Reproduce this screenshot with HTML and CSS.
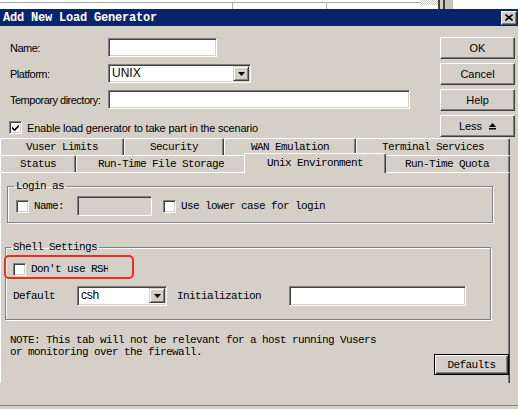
FILE: index.html
```html
<!DOCTYPE html>
<html lang="en">
<head>
<meta charset="utf-8">
<title>Add New Load Generator</title>
<link rel="stylesheet" href="styles.css">
</head>
<body>
<div class="topstrip">
  <div class="ts-seg ts-1"></div>
  <div class="ts-seg ts-2"></div>
  <div class="ts-seg ts-3"></div>
  <div class="ts-check"></div>
  <div class="ts-bar"></div>
  <div class="ts-gap"></div>
  <div class="ts-bar"></div>
  <div class="ts-grey"></div>
</div>
<div class="titlebar">
  <span class="title">Add New Load Generator</span>
  <span class="close"><svg width="8" height="7" viewBox="0 0 8 7"><path d="M0.5 0.5 L7.5 6.5 M7.5 0.5 L0.5 6.5" stroke="#000" stroke-width="1.6"/></svg></span>
</div>
<div class="upper">
  <div class="form">
    <div class="row r1"><span class="lbl">Name:</span><span class="edit w-name"></span></div>
    <div class="row r2"><span class="lbl">Platform:</span>
      <span class="combo w-platform"><span class="combo-text">UNIX</span><span class="drop"><svg width="7" height="4" viewBox="0 0 7 4"><polygon points="0,0 7,0 3.5,4" fill="#000"/></svg></span></span>
    </div>
    <div class="row r3"><span class="lbl">Temporary directory:</span><span class="edit w-temp"></span></div>
    <div class="row r4"><span class="chk"><svg width="7" height="7" viewBox="0 0 7 7"><path d="M0 2.5 L2.5 5 L7 0.5 L7 2.8 L2.5 7.3 L0 4.8 Z" fill="#000"/></svg></span><span class="chk-label">Enable load generator to take part in the scenario</span></div>
  </div>
  <div class="buttons">
    <div class="btn">OK</div>
    <div class="btn">Cancel</div>
    <div class="btn">Help</div>
    <div class="btn">Less <svg class="less-ico" width="7" height="7" viewBox="0 0 7 7"><polygon points="3.5,0 7,4 0,4" fill="#000"/><rect x="0" y="5" width="7" height="1.5" fill="#000"/></svg></div>
  </div>
</div>
<div class="tabs">
  <div class="tabrow back">
    <div class="tab t-vuser">Vuser Limits</div>
    <div class="tab t-security">Security</div>
    <div class="tab t-wan">WAN Emulation</div>
    <div class="tab t-terminal">Terminal Services</div>
  </div>
  <div class="tabrow front">
    <div class="tab t-status">Status</div>
    <div class="tab t-rtfs">Run-Time File Storage</div>
    <div class="tab t-unix selected">Unix Environment</div>
    <div class="tab t-quota">Run-Time Quota</div>
  </div>
</div>
<div class="panel">
  <fieldset class="group g-login">
    <legend>Login as</legend>
    <div class="grow login-row">
      <span class="chk"></span>
      <span class="mono lbl-name">Name:</span>
      <span class="edit disabled w-login"></span>
      <span class="chk chk-lower"></span>
      <span class="mono lbl-lower">Use lower case for login</span>
    </div>
  </fieldset>
  <fieldset class="group g-shell">
    <legend>Shell Settings</legend>
    <div class="grow rsh-row">
      <span class="chk"></span>
      <span class="mono rsh-label">Don't use RSH</span>
      <span class="highlight"></span>
    </div>
    <div class="grow shell-row">
      <span class="mono lbl-default">Default</span>
      <span class="combo w-shell"><span class="combo-text shell-text">csh</span><span class="drop"><svg width="7" height="4" viewBox="0 0 7 4"><polygon points="0,0 7,0 3.5,4" fill="#000"/></svg></span></span>
      <span class="mono lbl-init">Initialization</span>
      <span class="edit w-init"></span>
    </div>
  </fieldset>
  <div class="bottom-row">
    <p class="mono note">NOTE: This tab will not be relevant for a host running Vusers<br>or monitoring over the firewall.</p>
    <div class="btn default-btn mono">Defaults</div>
  </div>
</div>
<div class="footer-line"></div>
</body>
</html>
```
FILE: styles.css
```css
* { box-sizing: border-box; }
html, body { margin: 0; padding: 0; }
body {
  width: 518px;
  height: 409px;
  overflow: hidden;
  background: #d4d0c8;
  font-family: "Liberation Sans", Arial, sans-serif;
  font-size: 11px;
  color: #000;
}

/* top strip (window behind) */
.topstrip { height: 9px; background: #fff; display: flex; padding-top: 2px; }
.ts-seg { height: 7px; border-top: 1px solid #a8a8a8; }
.ts-1 { width: 233px; border-right: 1px solid #b0b0b0; }
.ts-2 { width: 94px; border-right: 1px solid #b0b0b0; }
.ts-3 { width: 94px; }
.ts-check {
  width: 17px; height: 5px; margin-top: -2px;
  background: repeating-conic-gradient(#c8c8c8 0 25%, #fff 0 50%) 0 0 / 2px 2px;
}
.ts-bar { width: 2px; margin-top: -2px; background: #404040; }
.ts-gap { width: 3px; margin-top: -2px; background: #d4d0c8; }
.ts-grey { width: 8px; margin-top: -2px; background: #c8c4bc; }

/* title bar */
.titlebar {
  height: 17px;
  background: #0a246a;
  display: flex;
  align-items: center;
  justify-content: space-between;
  padding: 0 1px 0 3px;
}
.title {
  color: #fff;
  font-family: "Liberation Mono", monospace;
  font-weight: bold;
  font-size: 12px;
  letter-spacing: -0.2px;
}
.close {
  width: 16px; height: 14px;
  background: #d4d0c8;
  border: 1px solid; border-color: #fff #404040 #404040 #fff;
  box-shadow: inset -1px -1px 0 #808080;
  display: flex; align-items: center; justify-content: center;
}

/* upper area */
.upper { display: flex; height: 112px; }
.form { width: 440px; padding-top: 12px; }
.row { display: flex; align-items: center; }
.r1, .r2, .r3 { height: 19px; }
.r2, .r3 { margin-top: 7px; }
.r4 { height: 13px; margin-top: 12px; }
.lbl { width: 108px; padding-left: 10px; letter-spacing: -0.5px; white-space: nowrap; flex: none; }
.edit {
  display: block; height: 19px; background: #fff; flex: none;
  border: 1px solid; border-color: #808080 #fff #fff #808080;
  box-shadow: inset 1px 1px 0 #404040, inset -1px -1px 0 #d4d0c8;
}
.edit.disabled { background: #d4d0c8; }
.w-name { width: 109px; }
.w-temp { width: 302px; }
.combo {
  display: flex; height: 19px; background: #fff; padding: 1px; flex: none;
  border: 1px solid; border-color: #808080 #fff #fff #808080;
  box-shadow: inset 1px 1px 0 #404040, inset -1px -1px 0 #d4d0c8;
}
.w-platform { width: 143px; }
.combo-text { flex: 1; padding-left: 2px; font-size: 12px; line-height: 15px; }
.drop {
  width: 16px; height: 15px; background: #d4d0c8;
  border: 1px solid; border-color: #d4d0c8 #404040 #404040 #d4d0c8;
  box-shadow: inset 1px 1px 0 #fff, inset -1px -1px 0 #808080;
  display: flex; align-items: center; justify-content: center;
}
.chk {
  width: 13px; height: 13px; flex: none; background: #fff;
  border: 1px solid; border-color: #808080 #fff #fff #808080;
  box-shadow: inset 1px 1px 0 #404040, inset -1px -1px 0 #d4d0c8;
  display: flex; align-items: center; justify-content: center;
}
.r4 .chk { margin-left: 9px; }
.chk-label { margin-left: 5px; letter-spacing: -0.2px; white-space: nowrap; }

/* buttons */
.buttons { width: 75px; padding-top: 11px; display: flex; flex-direction: column; gap: 4px; }
.btn {
  height: 22px; background: #d4d0c8;
  border: 1px solid; border-color: #fff #404040 #404040 #fff;
  box-shadow: inset -1px -1px 0 #808080;
  display: flex; align-items: center; justify-content: center;
  font-size: 11px;
}
.less-ico { margin-left: 7px; }

/* tabs */
.tabs { height: 34px; }
.tabrow { display: flex; height: 17px; align-items: flex-end; }
.mono, .tab, legend {
  font-family: "Liberation Mono", "DejaVu Sans Mono", monospace;
  font-size: 11px;
  letter-spacing: -0.6px;
}
.tab {
  height: 17px; flex: none;
  border-top: 1px solid #fff; border-left: 1px solid #fff; border-right: 1px solid #404040;
  box-shadow: inset -1px 0 0 #808080;
  border-radius: 2px 2px 0 0;
  display: flex; align-items: center; justify-content: center;
  background: #d4d0c8; white-space: nowrap;
}
.t-vuser { width: 124px; }
.t-security { width: 100px; }
.t-wan { width: 132px; }
.t-terminal { width: 154px; }
.t-status { width: 76px; }
.t-rtfs { width: 170px; }
.t-unix { width: 138px; }
.t-quota { width: 126px; }
.tab.selected {
  position: relative; z-index: 2;
  width: 142px; height: 20px;
  margin: 0 -2px -1px;
  padding-bottom: 2px;
}

/* panel */
.panel {
  width: 510px; height: 211px;
  border-top: 1px solid #fff; border-left: 1px solid #fff; border-right: 1px solid #404040;
  box-shadow: inset -1px 0 0 #808080;
  padding-top: 7px;
}
.group {
  margin: 0; padding: 0; min-width: 0;
  width: 486px;
  border: 1px solid #808080;
  box-shadow: inset 1px 1px 0 #fff, 1px 1px 0 #fff;
}
.group legend { padding: 0 2px; line-height: 12px; }
.g-login { margin-left: 6px; padding: 4px 0 6px; }
.g-login legend { margin-left: 6px; }
.g-shell { margin: 18px 0 0 4px; padding: 4px 0 13px; }
.g-shell legend { margin-left: 5px; }
.grow { display: flex; align-items: center; white-space: nowrap; }
.login-row { height: 20px; }
.login-row > .chk:first-child { margin-left: 8px; }
.lbl-name { margin-left: 5px; }
.w-login { width: 75px; margin-left: 13px; height: 20px; }
.chk-lower { margin-left: 11px; }
.lbl-lower { margin-left: 5px; }

.rsh-row { height: 24px; position: relative; }
.rsh-row .chk { margin-left: 7px; }
.rsh-label { margin-left: 5px; width: 77px; overflow: hidden; }
.highlight {
  position: absolute; left: -2px; top: -2px;
  width: 130px; height: 24px;
  border: 2px solid #ee2a24; border-radius: 5px;
}
.shell-row { height: 20px; margin-top: 5px; }
.lbl-default { margin-left: 7px; width: 64px; }
.w-shell { width: 90px; height: 20px; }
.shell-text { font-size: 12px; letter-spacing: -0.3px; }
.lbl-init { margin-left: 10px; width: 112px; }
.w-init { width: 177px; height: 20px; }

.bottom-row { display: flex; margin-top: 14px; }
.note { margin: 0 0 0 9px; line-height: 12px; white-space: nowrap; }
.default-btn {
  margin-left: auto; margin-top: 20px;
  width: 75px; height: 21px;
  border: 1px solid #000;
  box-shadow: inset 1px 1px 0 #fff, inset -1px -1px 0 #404040, inset -2px -2px 0 #808080;
}

.footer-line { margin-top: 22px; height: 1px; background: #808080; }
```
